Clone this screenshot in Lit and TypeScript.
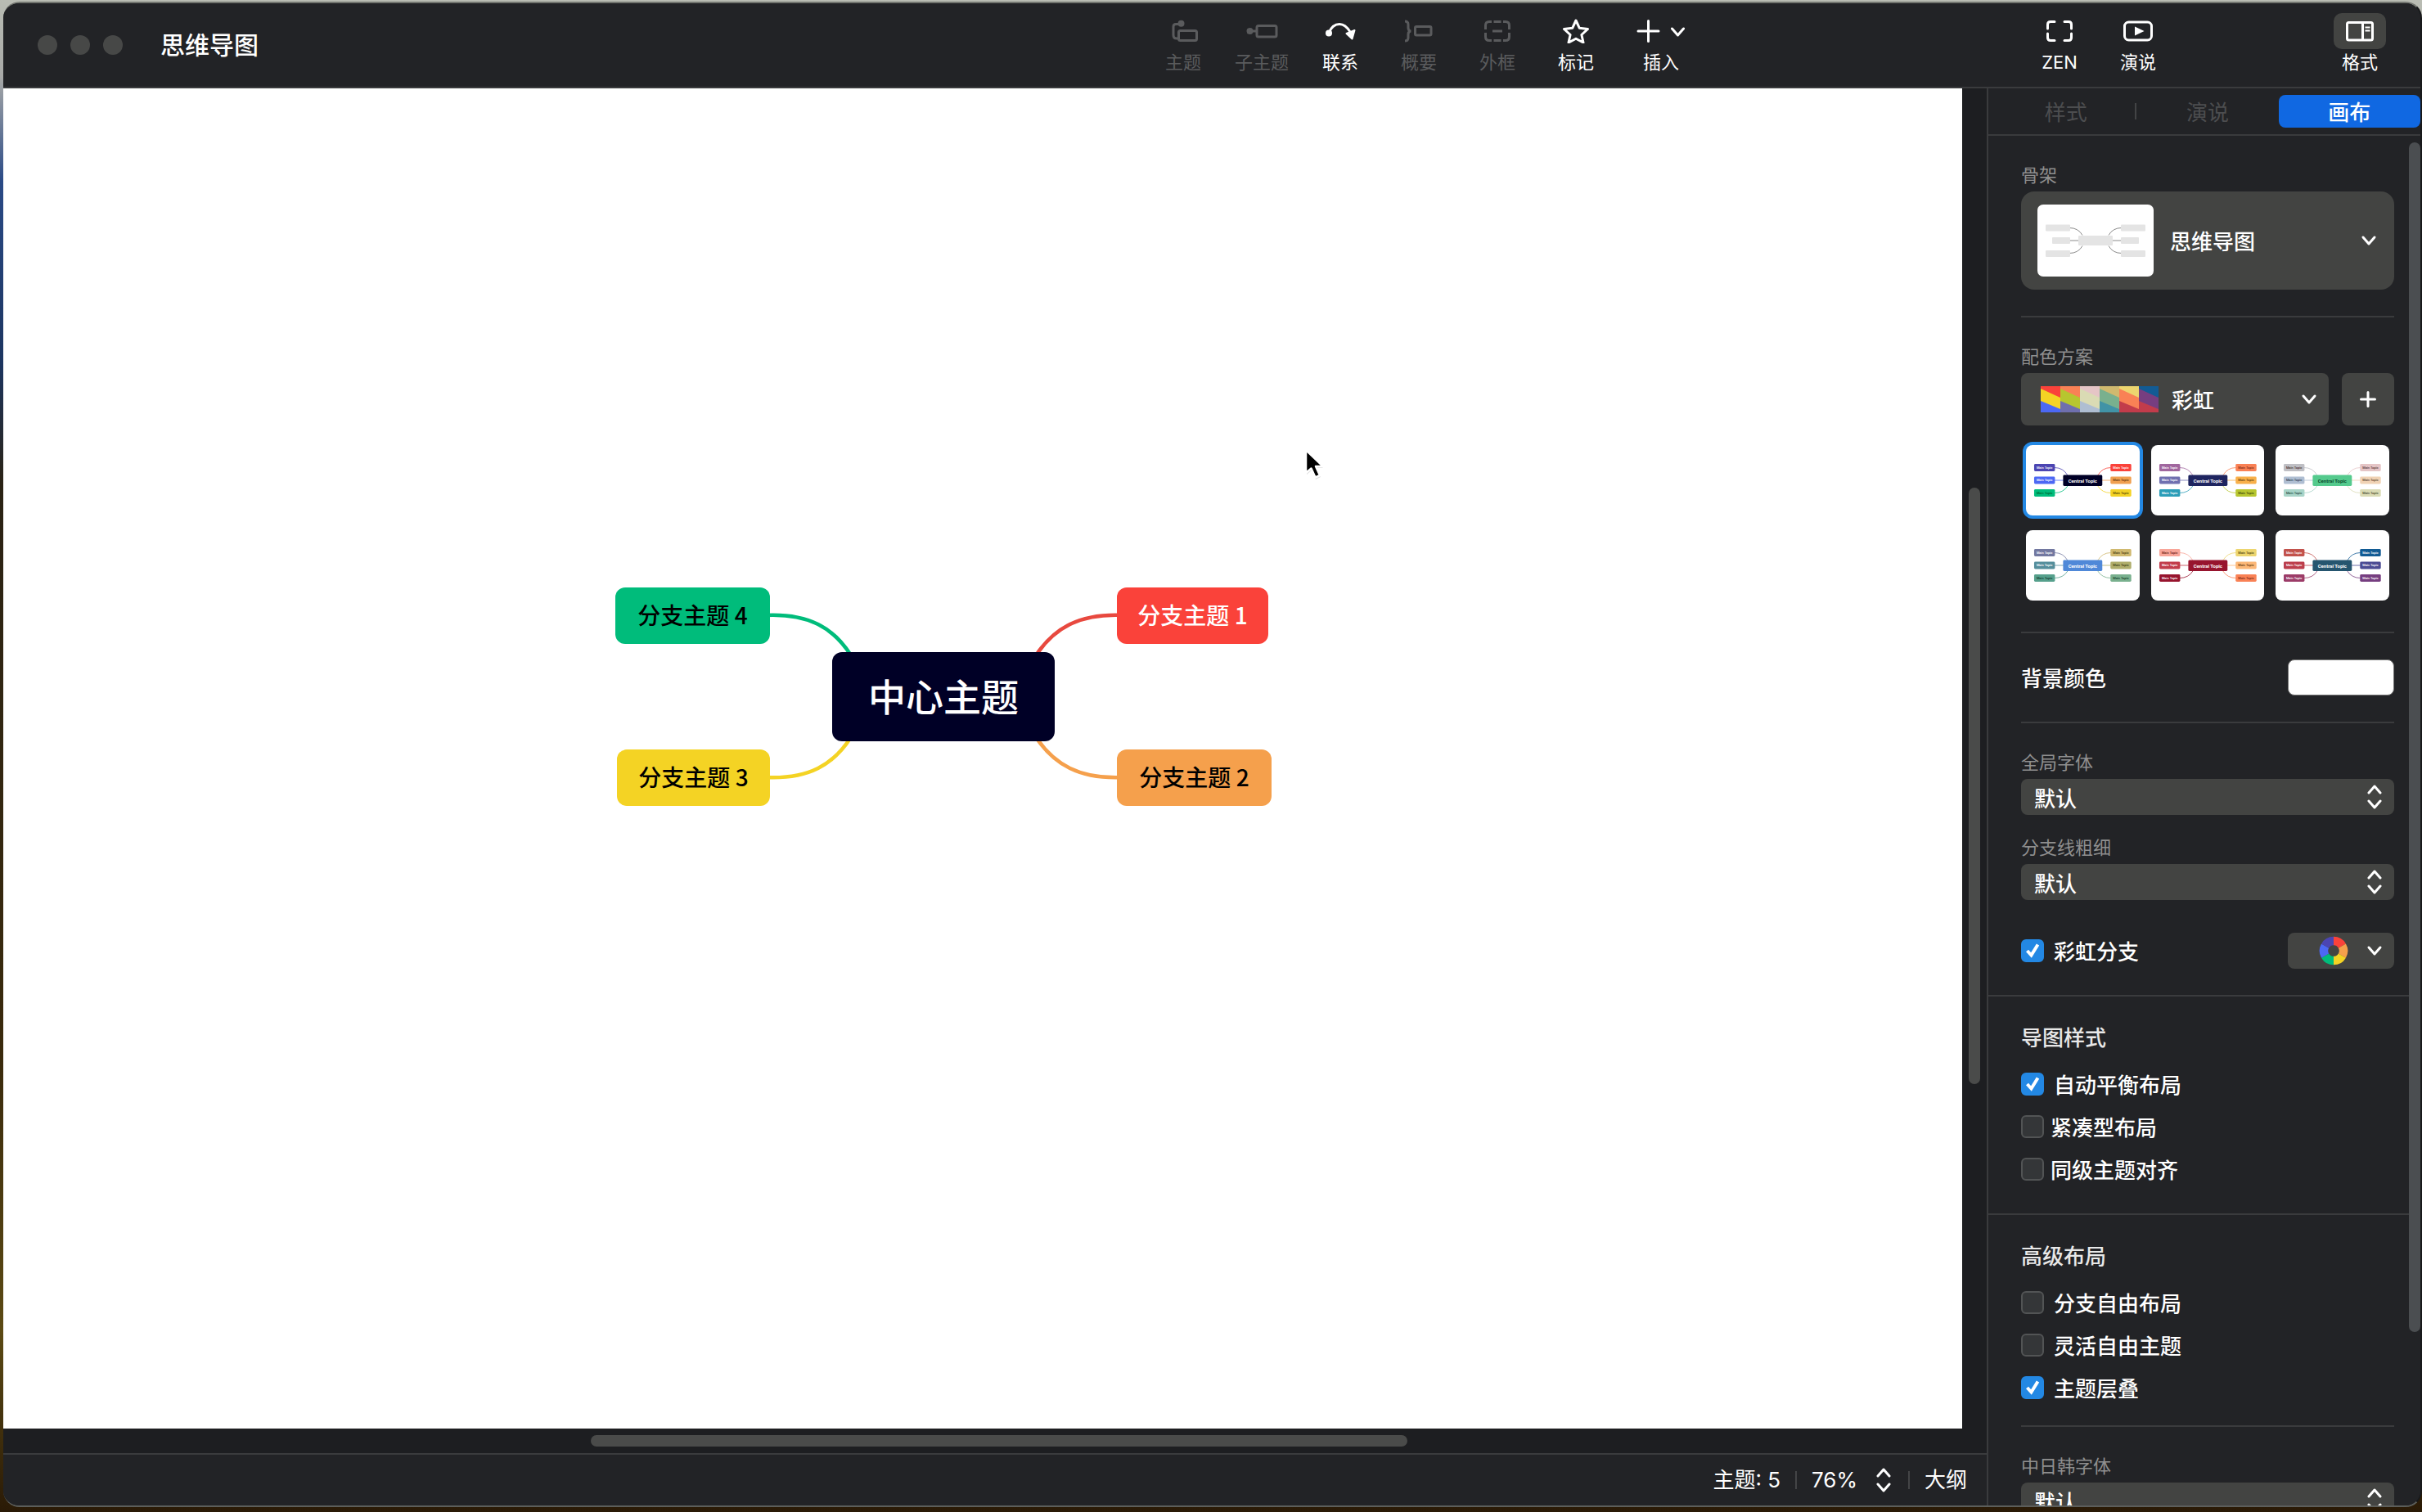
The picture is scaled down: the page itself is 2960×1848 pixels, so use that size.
import { LitElement, html, svg, css, nothing } from "lit";
import { customElement } from "lit/decorators.js";
import { classMap } from "lit/directives/class-map.js";
import { styleMap } from "lit/directives/style-map.js";

const chevronDown = html`<svg class="chev" width="20" height="14" viewBox="0 0 20 14" aria-hidden="true">
  <path d="M3 3l7 8 7-8" fill="none" stroke="#fff" stroke-width="3" stroke-linecap="round" stroke-linejoin="round" />
</svg>`;

const upDown = html`<svg class="updown" width="20" height="30" viewBox="0 0 20 30" aria-hidden="true">
  <path d="M3 10l7-8 7 8M3 20l7 8 7-8" fill="none" stroke="#fff" stroke-width="3" stroke-linecap="round" stroke-linejoin="round" />
</svg>`;

interface Tool {
  label: string;
  enabled: boolean;
  width: number;
  icon: unknown;
  active?: boolean;
}

const tools: Tool[] = [
  {
    label: "主题", enabled: false, width: 40,
    icon: svg`<circle cx="17.5" cy="5.7" r="4" fill="currentColor" stroke="none"/><path d="M17 6.5h-6q-3 0-3 3V20q0 4 4 4h3"/><rect x="14.5" y="14.5" width="22" height="12" rx="2"/>`,
  },
  {
    label: "子主题", enabled: false, width: 40,
    icon: svg`<circle cx="5.5" cy="15" r="4" fill="currentColor" stroke="none"/><path d="M6 15h8"/><rect x="14" y="8.5" width="24" height="13.5" rx="2"/>`,
  },
  {
    label: "联系", enabled: true, width: 40,
    icon: svg`<circle cx="6" cy="17.5" r="4" fill="currentColor" stroke="none"/><path d="M6 17C9 10 14 6.5 19 6.5C25 6.5 29 11 32 16"/><path d="M27.5 18L37.5 14 34.5 24.5z" fill="currentColor" stroke-width="2" stroke-linejoin="round"/>`,
  },
  {
    label: "概要", enabled: false, width: 40,
    icon: svg`<path d="M3 3q4 0 4 4v4q0 4 3.5 4Q7 15 7 19v4q0 4-4 4"/><rect x="15.5" y="9.5" width="19.5" height="10.5" rx="1.5"/>`,
  },
  {
    label: "外框", enabled: false, width: 40,
    icon: svg`<path d="M13 3.5H10Q5.5 3.5 5.5 8V13M5.5 17V22Q5.5 26.5 10 26.5H13M27 3.500H30Q34.5 3.5 34.5 8V13M34.5 17V22Q34.5 26.5 30 26.5H27M15.500 3.5H24.500M15.500 26.5H24.500M14 15H26"/>`,
  },
  {
    label: "标记", enabled: true, width: 40,
    icon: svg`<path stroke-linejoin="round" d="M20 2l4.3 9.3 10.2 1.2-7.600 7 2.1 9.5-9-4.8-9 4.8 2.1-9.500-7.600-7 10.200-1.200z"/>`,
  },
  {
    label: "插入", enabled: true, width: 60,
    icon: svg`<path stroke-linecap="round" stroke-linejoin="round" d="M2 15H27M14.5 2.500V27.500M43.500 12L50.500 20L57.500 12"/>`,
  },
];

const rightTools: Tool[] = [
  {
    label: "ZEN", enabled: true, width: 40,
    icon: svg`<path stroke-linecap="round" stroke-linejoin="round" d="M5.5 12V7Q5.5 3.5 9 3.5H14M26 3.5H31Q34.5 3.5 34.5 7V12M34.5 18V23Q34.5 26.5 31 26.5H26M14 26.5H9Q5.5 26.5 5.5 23V18"/>`,
  },
  {
    label: "演说", enabled: true, width: 40,
    icon: svg`<rect x="3.5" y="4" width="33" height="22" rx="5"/><path d="M16 9.5L27.5 15L16 20.5z" fill="currentColor" stroke="none"/>`,
  },
];

const formatTool: Tool = {
  label: "格式", enabled: true, width: 40, active: true,
  icon: svg`<rect x="4.5" y="4.5" width="31" height="21.5" rx="2"/><path d="M23.5 4V26"/><path d="M26.5 10.5H32.5M26.5 14.5H32.5" stroke-width="2"/>`,
};

const topics = [
  { text: "分支主题 4", left: 748, top: 610, width: 189, bg: "#00bc7b", fg: "#000" },
  { text: "分支主题 3", left: 750, top: 808, width: 187, bg: "#f4d324", fg: "#000" },
  { text: "分支主题 1", left: 1361, top: 610, width: 185, bg: "#fa423a", fg: "#fff" },
  { text: "分支主题 2", left: 1361, top: 808, width: 189, bg: "#f5a04c", fg: "#000" },
];

const branches = [
  { d: "M930 644C985 641 1015 660 1036 693", color: "#00bc7b" },
  { d: "M930 842C985 845 1015 826 1036 793", color: "#f4d324" },
  { d: "M1370 644C1315 641 1284 660 1262 693", color: "#e8493f" },
  { d: "M1370 842C1315 845 1284 826 1262 793", color: "#f5a04c" },
];

const swatchColumns = [
  ["#fa423a", "#f4d324", "#4c68f4"],
  ["#f98155", "#b7c62f", "#6f6fae"],
  ["#e5c5c6", "#dadbb4", "#afbed2"],
  ["#d0b96f", "#79b08e", "#4193a6"],
  ["#ecd56f", "#f98155", "#c23c4b"],
  ["#125b94", "#763e80", "#c23c4b"],
];

interface Palette {
  center: string;
  centerText: string;
  left: [string, string][];
  right: [string, string][];
}

const W = "#fff";
const D = "#4a3030";
const palettes: Palette[] = [
  { center: "#000026", centerText: W, left: [["#4b45b2", W], ["#4c68f4", W], ["#00bc7b", "#063"]], right: [["#fa423a", W], ["#f0a050", "#63350c"], ["#f4d324", "#5c4c08"]] },
  { center: "#1f2560", centerText: W, left: [["#a0669e", W], ["#7070b0", W], ["#2b9db8", W]], right: [["#f98155", "#7c2b17"], ["#f8b04a", "#66400c"], ["#b7c62f", "#454c0a"]] },
  { center: "#54ca8d", centerText: "#0c4a2c", left: [["#bfbfc4", D], ["#afbed2", "#333f55"], ["#a8d4c8", "#2c5048"]], right: [["#e5c5c6", "#5c3c3c"], ["#f0d2b4", "#5c4430"], ["#dadbb4", "#4c4c30"]] },
  { center: "#4f88d8", centerText: W, left: [["#7278a0", W], ["#558e9c", W], ["#56a08c", "#123c30"]], right: [["#d0b96f", "#4c3f12"], ["#b0ae6c", "#403f14"], ["#79b08e", "#163f28"]] },
  { center: "#97142e", centerText: W, left: [["#f8a598", "#6c241c"], ["#c23c4b", W], ["#97142e", W]], right: [["#ecd56f", "#564810"], ["#fcb878", "#6a3c10"], ["#f98155", "#7c2b17"]] },
  { center: "#25556f", centerText: W, left: [["#c2524c", W], ["#bc3e4c", W], ["#9c3c68", W]], right: [["#125b94", W], ["#4c4c94", W], ["#763e80", W]] },
];

const rowY = [23, 38.5, 54];

function paletteArt(p: Palette) {
  const curve = (i: number, x0: number, x1: number) => {
    const y = rowY[i] + 4.5;
    const end = i === 0 ? 37 : 50;
    return i === 1 ? `M${x0} ${y}H${x1}` : `M${x0} ${y}Q${(x0 + 2 * x1) / 3} ${y} ${x1} ${end}`;
  };
  return html`<svg class="art" viewBox="0 0 139 86" aria-hidden="true">
    ${p.left.map((c, i) => svg`<path d=${curve(i, 35, 51)} fill="none" stroke=${c[0]} stroke-width="0.8"/>
      <rect x="10" y=${rowY[i]} width="25.5" height="9" rx="1.5" fill=${c[0]}/>
      <text x="22.7" y=${rowY[i] + 6} class="tiny" fill=${c[1]}>Main Topic</text>`)}
    ${p.right.map((c, i) => svg`<path d=${curve(i, 104, 88)} fill="none" stroke=${c[0]} stroke-width="0.8"/>
      <rect x="103.5" y=${rowY[i]} width="25.5" height="9" rx="1.5" fill=${c[0]}/>
      <text x="116.2" y=${rowY[i] + 6} class="tiny" fill=${c[1]}>Main Topic</text>`)}
    <rect x="45.5" y="36.5" width="48" height="13.5" rx="1.5" fill=${p.center}/>
    <text x="69.5" y="46" class="small" fill=${p.centerText}>Central Topic</text>
  </svg>`;
}

const skeletonArt = html`<svg class="skeleton" width="142" height="88" viewBox="0 0 142 88" aria-hidden="true">
  <rect width="142" height="88" rx="7" fill="#fff"/>
  <path d="M39 28.5Q50 28.5 55 37.5M39 44H51M39 59.5Q50 59.5 55 50.5M103 28.5Q92 28.5 87 37.5M103 44H91M103 59.5Q92 59.5 87 50.5" fill="none" stroke="#8a8a8a"/>
  <g fill="#e4e4e4">
    <rect x="10" y="24.5" width="30" height="8" rx="1"/><rect x="18" y="40" width="22" height="8" rx="1"/><rect x="10" y="56" width="30" height="8" rx="1"/>
    <rect x="102" y="24.5" width="30" height="8" rx="1"/><rect x="102" y="40" width="22" height="8" rx="1"/><rect x="102" y="56" width="30" height="8" rx="1"/>
    <rect x="50" y="38" width="42" height="12" rx="1"/>
  </g>
</svg>`;

const wheelColors = ["#fa423a", "#f5a04c", "#f4d324", "#00bc7b", "#4c68f4", "#4b45b2"];

function wheel() {
  const pt = (deg: number) => {
    const a = ((deg - 90) * Math.PI) / 180;
    return `${(18 + 12 * Math.cos(a)).toFixed(2)} ${(18 + 12 * Math.sin(a)).toFixed(2)}`;
  };
  return html`<svg width="36" height="36" viewBox="0 0 36 36" aria-hidden="true">
    ${wheelColors.map((c, i) => svg`<path d="M${pt(i * 60)}A12 12 0 0 1 ${pt(i * 60 + 60)}" fill="none" stroke=${c} stroke-width="10.5"/>`)}
  </svg>`;
}

interface Option {
  id: string;
  label: string;
  checked: boolean;
  tight?: boolean;
}

const mapStyle: Option[] = [
  { id: "balance", label: "自动平衡布局", checked: true },
  { id: "compact", label: "紧凑型布局", checked: false, tight: true },
  { id: "align", label: "同级主题对齐", checked: false, tight: true },
];

const advanced: Option[] = [
  { id: "free-branch", label: "分支自由布局", checked: false },
  { id: "flex-topic", label: "灵活自由主题", checked: false },
  { id: "overlap", label: "主题层叠", checked: true },
];

const base = css`
  * { box-sizing: border-box; }
  button, select, input { font: inherit; color: inherit; margin: 0; padding: 0; border: 0; background: none; }
  svg { display: block; flex: none; }
`;

@customElement("app-toolbar")
class AppToolbar extends LitElement {
  static styles = [base, css`
    :host { display: flex; align-items: center; height: 104px; padding: 0 26px 0 0; border-bottom: 2px solid #3a3b3d; background: #222326; }
    .lead { flex: 1; display: flex; align-items: center; padding-left: 42px; }
    .lights { display: flex; gap: 16px; }
    .light { width: 24px; height: 24px; border-radius: 50%; background: #474847; }
    .title { margin: 0 0 0 46px; font-size: 30px; line-height: 40px; font-weight: 500; }
    .group { display: flex; padding-bottom: 6px; }
    .main { margin-right: 383px; }
    .view { margin-right: 175px; }
    .tool { width: 96px; display: flex; flex-direction: column; align-items: center; gap: 4px; font-size: 22px; line-height: 24px; color: #fff; }
    .tool.wide { width: 112px; }
    .tool:disabled { color: #5a5b5d; }
    .plate { height: 44px; padding: 0 12px; display: grid; place-items: center; border-radius: 10px; }
    .plate.active { background: #434442; }
  `];

  private tool(t: Tool) {
    return html`<button class=${classMap({ tool: true, wide: t.width > 40 })} ?disabled=${!t.enabled}>
      <span class=${classMap({ plate: true, active: !!t.active })}>
        <svg width=${t.width} height="30" viewBox="0 0 ${t.width} 30" fill="none" stroke="currentColor" stroke-width="3" aria-hidden="true">${t.icon}</svg>
      </span>
      <span>${t.label}</span>
    </button>`;
  }

  render() {
    return html`
      <div class="lead">
        <div class="lights"><span class="light"></span><span class="light"></span><span class="light"></span></div>
        <h1 class="title">思维导图</h1>
      </div>
      <div class="group main">${tools.map((t) => this.tool(t))}</div>
      <div class="group view">${rightTools.map((t) => this.tool(t))}</div>
      <div class="group">${this.tool(formatTool)}</div>`;
  }
}

@customElement("map-canvas")
class MapCanvas extends LitElement {
  static styles = [base, css`
    :host { display: flex; flex-direction: column; min-width: 0; background: #1d1e21; }
    .view { flex: 1; display: flex; min-height: 0; }
    .sheet { flex: 1; position: relative; overflow: hidden; background: #fff; font-family: "Noto Sans CJK SC", sans-serif; font-weight: 500; }
    .lines { position: absolute; left: 0; top: 0; }
    .topic, .center { position: absolute; display: grid; place-items: center; border-radius: 12px; white-space: nowrap; }
    .topic { height: 69px; padding-bottom: 3px; font-size: 28px; line-height: 36px; }
    .center { left: 1013px; top: 689px; width: 272px; height: 109px; padding-bottom: 6px; background: #000026; color: #fff; font-size: 46px; line-height: 60px; }
    .cursor { position: absolute; left: 1589px; top: 439px; }
    .vtrack { width: 30px; display: flex; flex-direction: column; align-items: center; }
    .htrack { height: 30px; display: flex; align-items: center; }
    .thumb { border-radius: 7px; background: #4a4b4a; }
    .vtrack .thumb { width: 14px; }
    .htrack .thumb { height: 14px; }
    .v-before { flex: 488; }
    .v-thumb { flex: 729; }
    .v-after { flex: 421; }
    .h-before { flex: 718; }
    .h-thumb { flex: 998; }
    .h-after { flex: 708; }
  `];

  render() {
    return html`
      <div class="view">
        <main class="sheet">
          <svg class="lines" width="2400" height="1640" aria-hidden="true">
            ${branches.map((b) => svg`<path d=${b.d} fill="none" stroke=${b.color} stroke-width="4.5"/>`)}
          </svg>
          <div class="center">中心主题</div>
          ${topics.map((t) => html`<div class="topic" style=${styleMap({ left: t.left + "px", top: t.top + "px", width: t.width + "px", background: t.bg, color: t.fg })}>${t.text}</div>`)}
          <svg class="cursor" width="30" height="42" viewBox="0 0 30 42" aria-hidden="true">
            <path d="M4 4v29l6-5 5 11 6-3-5-11h8z" fill="#ccc" opacity=".6"/>
            <path d="M3 3v28l6.5-5.5 5 11 5.5-2.5-5-11h9z" fill="#000" stroke="#fff" stroke-width="2.5" stroke-linejoin="round"/>
          </svg>
        </main>
        <div class="vtrack">
          <span class="v-before"></span><span class="thumb v-thumb"></span><span class="v-after"></span>
        </div>
      </div>
      <div class="htrack">
        <span class="h-before"></span><span class="thumb h-thumb"></span><span class="h-after"></span>
      </div>`;
  }
}

@customElement("status-bar")
class StatusBar extends LitElement {
  static styles = [base, css`
    :host { display: flex; align-items: center; justify-content: flex-end; height: 64px; padding-right: 24px; border-top: 2px solid #3a3b3d; background: #222326; font-size: 26px; line-height: 32px; }
    .sep { width: 2px; height: 22px; margin: 0 18px; background: #434446; }
    .zoom { display: flex; align-items: center; gap: 22px; margin-right: 2px; }
  `];

  render() {
    return html`
      <span>主题: 5</span><span class="sep"></span>
      <button class="zoom"><span>76%</span>${upDown}</button><span class="sep"></span>
      <button>大纲</button>`;
  }
}

@customElement("format-panel")
class FormatPanel extends LitElement {
  static styles = [base, css`
    :host { position: relative; display: flex; flex-direction: column; overflow: hidden; border-left: 2px solid #3a3b3d; background: #222326; font-size: 26px; line-height: 32px; }
    .tabs, .box, .background, .check { font-family: "Noto Sans CJK SC", sans-serif; }
    .tabs { flex: none; display: grid; grid-template-columns: 1fr 1fr 1fr; align-items: center; height: 58px; padding-left: 8px; border-bottom: 2px solid #3a3b3d; }
    .tab { height: 40px; border-radius: 8px; color: #4c4d4f; }
    .tab.first { display: flex; align-items: center; justify-content: space-between; border-radius: 0; }
    .tab.first::before { content: ""; width: 2px; }
    .tab.first::after { content: ""; width: 2px; height: 20px; background: #434446; }
    .tab.on { background: #1068e2; color: #fff; font-weight: 500; }
    .scroll { flex: 1; min-height: 0; overflow: hidden; }
    .bar { position: absolute; right: 0; top: 66px; bottom: 212px; width: 14px; border-radius: 7px; background: #4b4e51; }
    .section { padding: 0 32px 0 40px; border-bottom: 2px solid #3a3b3d; }
    .section:last-child { border-bottom: 0; }
    .first-section { padding-bottom: 32px; }
    .styles { padding-bottom: 28px; }
    .rule { height: 2px; margin: 0; border: 0; background: #3a3b3d; }
    .caption { display: block; padding-top: 34px; margin-bottom: 6px; font-size: 22px; line-height: 28px; color: #8f8f8f; }
    .caption.next { padding-top: 26px; }
    .box { background: #434442; border-radius: 8px; color: #fff; }
    .structure { display: flex; align-items: center; width: 100%; height: 120px; margin-bottom: 32px; padding: 0 21px 0 20px; border-radius: 16px; font-weight: 500; text-align: left; }
    .structure .name { flex: 1; margin-left: 20px; }
    .pair { display: flex; gap: 16px; margin-bottom: 20px; }
    .scheme { flex: 1; display: flex; align-items: center; height: 64px; padding: 0 14px 0 24px; text-align: left; font-weight: 500; }
    .scheme .name { flex: 1; margin-left: 16px; }
    .add { width: 64px; height: 64px; display: grid; place-items: center; }
    .grid { display: grid; grid-template-columns: repeat(3, 1fr); gap: 18px 14px; padding: 4px 6px 38px; }
    .card { height: 86px; background: #fff; border-radius: 8px; overflow: hidden; }
    .card.on { box-shadow: 0 0 0 4px #2388e4; }
    .art { width: 100%; height: 100%; }
    .tiny, .small { font-family: Roboto, sans-serif; font-weight: 700; text-anchor: middle; }
    .tiny { font-size: 4px; font-weight: 500; }
    .small { font-size: 6px; }
    .row { display: flex; align-items: center; justify-content: space-between; }
    .background { margin: 32px 0; height: 44px; font-weight: 500; }
    .color { width: 130px; height: 44px; border-radius: 8px; background: #fff; border: 1px solid #777; }
    .pick { display: grid; align-items: center; height: 44px; }
    .pick > * { grid-area: 1 / 1; }
    .pick select { appearance: none; width: 100%; height: 44px; padding: 1px 0 0 16px; font-weight: 500; }
    .pick svg { justify-self: end; margin-right: 14px; pointer-events: none; }
    .rainbow { margin-top: 40px; height: 44px; }
    .wheel { width: 130px; height: 44px; display: flex; align-items: center; justify-content: flex-end; gap: 22px; padding-right: 14px; }
    .heading { margin: 0; padding: 35px 0 14px; font-size: 26px; line-height: 32px; font-weight: 500; color: #e8e8e8; }
    .check { display: flex; align-items: center; gap: 12px; height: 52px; color: #fff; font-weight: 500; }
    .check.tight { gap: 8px; }
    .tick { display: grid; width: 28px; height: 28px; }
    .tick > * { grid-area: 1 / 1; }
    .tick input { appearance: none; width: 28px; height: 28px; border: 2px solid #525455; border-radius: 6px; background: #343638; }
    .tick input:checked { border-color: #2388e4; background: #2388e4; }
    .tick svg { pointer-events: none; }
    .advanced { margin-bottom: 20px; }
  `];

  private check(o: Option) {
    return html`<label class=${classMap({ check: true, tight: !!o.tight })} for=${o.id}>
      <span class="tick">
        <input type="checkbox" id=${o.id} .checked=${o.checked} />
        ${o.checked ? html`<svg width="28" height="28" viewBox="0 0 28 28" aria-hidden="true"><path d="M7.5 14L12.5 19.500L20.500 6.500" fill="none" stroke="#fff" stroke-width="4"/></svg>` : nothing}
      </span>
      <span>${o.label}</span>
    </label>`;
  }

  private pick(id: string) {
    return html`<div class="pick box"><select id=${id}><option>默认</option></select>${upDown}</div>`;
  }

  render() {
    return html`
      <nav class="tabs">
        <button class="tab first">样式</button>
        <button class="tab">演说</button>
        <button class="tab on">画布</button>
      </nav>
      <div class="scroll">
        <section class="section first-section">
          <span class="caption">骨架</span>
          <button class="structure box">${skeletonArt}<span class="name">思维导图</span>${chevronDown}</button>
          <hr class="rule" />
          <span class="caption">配色方案</span>
          <div class="pair">
            <button class="scheme box">
              <svg width="144" height="32" viewBox="0 0 144 32" aria-hidden="true">
                ${swatchColumns.map((c, i) => svg`<g transform="translate(${i * 24} 0)">
                  <rect width="24" height="32" fill=${c[1]}/>
                  <path d="M0 0h24v14L0 3z" fill=${c[0]}/>
                  <path d="M0 18l24 10v4H0z" fill=${c[2]}/>
                </g>`)}
              </svg>
              <span class="name">彩虹</span>${chevronDown}
            </button>
            <button class="add box" aria-label="+">
              <svg width="20" height="20" viewBox="0 0 20 20" aria-hidden="true"><path d="M1.5 10h17M10 1.5v17" stroke="#fff" stroke-width="3" stroke-linecap="round"/></svg>
            </button>
          </div>
          <div class="grid">
            ${palettes.map((p, i) => html`<button class=${classMap({ card: true, on: i === 0 })}>${paletteArt(p)}</button>`)}
          </div>
          <hr class="rule" />
          <div class="row background"><span id="bg">背景颜色</span><button class="color" aria-labelledby="bg"></button></div>
          <hr class="rule" />
          <label class="caption" for="font">全局字体</label>
          ${this.pick("font")}
          <label class="caption next" for="line">分支线粗细</label>
          ${this.pick("line")}
          <div class="row rainbow">
            ${this.check({ id: "rainbow", label: "彩虹分支", checked: true })}
            <button class="wheel box" aria-label="彩虹分支">${wheel()}${chevronDown}</button>
          </div>
        </section>
        <section class="section styles">
          <h2 class="heading">导图样式</h2>
          ${mapStyle.map((o) => this.check(o))}
        </section>
        <section class="section">
          <h2 class="heading">高级布局</h2>
          <div class="advanced">${advanced.map((o) => this.check(o))}</div>
          <hr class="rule" />
          <label class="caption" for="cjk">中日韩字体</label>
          ${this.pick("cjk")}
        </section>
      </div>
      <span class="bar"></span>`;
  }
}

@customElement("app-root")
class AppRoot extends LitElement {
  static styles = [base, css`
    :host { display: block; height: 100vh; padding: 2px 0 6px 4px; overflow: hidden; box-sizing: border-box;
      background: linear-gradient(180deg, #b9bcb3 0, #a9aaa8 5%, #2a4a86 12%, #1c3560 24%, #2a2214 32%, #3a2a0c 70%, #5c4a14 88%, #2a1a06 100%);
      font-family: Inter, "Noto Sans CJK SC", sans-serif; color: #fff; }
    .window { display: flex; flex-direction: column; height: 100%; border: 2px solid #5c5e5b; border-top-color: #72756f; border-left-width: 0; border-right-color: #18191b; border-radius: 20px; overflow: hidden; background: #222326; }
    .body { flex: 1; min-height: 0; display: flex; }
    .work { flex: 1; min-width: 0; display: flex; flex-direction: column; }
    map-canvas { flex: 1; min-height: 0; }
    format-panel { width: 530px; flex: none; }
  `];

  render() {
    return html`<div class="window">
      <app-toolbar></app-toolbar>
      <div class="body">
        <div class="work"><map-canvas></map-canvas><status-bar></status-bar></div>
        <format-panel></format-panel>
      </div>
    </div>`;
  }
}
